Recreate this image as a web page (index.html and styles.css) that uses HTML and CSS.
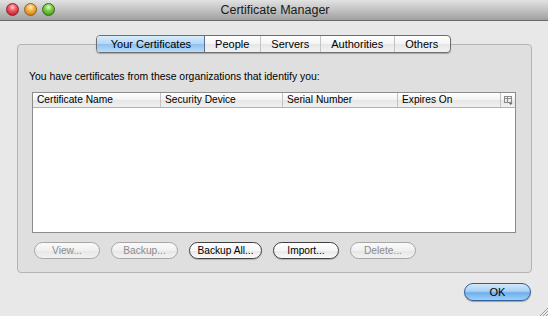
FILE: index.html
```html
<!DOCTYPE html>
<html>
<head>
<meta charset="utf-8">
<link rel="stylesheet" href="styles.css">
</head>
<body>
<div class="window">
  <div class="titlebar">
    <div class="lights">
      <span class="light red"></span>
      <span class="light orange"></span>
      <span class="light green"></span>
    </div>
    <div class="title">Certificate Manager</div>
  </div>
  <div class="content">
    <div class="tabs">
      <div class="tab selected">Your Certificates</div>
      <div class="tab">People</div>
      <div class="tab">Servers</div>
      <div class="tab">Authorities</div>
      <div class="tab last">Others</div>
    </div>
    <div class="group">
      <div class="label">You have certificates from these organizations that identify you:</div>
      <div class="table">
        <div class="thead">
          <div class="th c1">Certificate Name</div>
          <div class="th c2">Security Device</div>
          <div class="th c3">Serial Number</div>
          <div class="th c4">Expires On</div>
          <div class="th c5">
            <svg width="9" height="9" viewBox="0 0 9 9">
              <rect x="0.5" y="0.5" width="7" height="6" fill="none" stroke="#8a8a8a"/>
              <line x1="0.5" y1="2.5" x2="7.5" y2="2.5" stroke="#8a8a8a"/>
              <line x1="3.5" y1="0.5" x2="3.5" y2="6.5" stroke="#8a8a8a"/>
              <path d="M5 7 L8.5 7 L6.75 9 Z" fill="#666"/>
            </svg>
          </div>
        </div>
        <div class="tbody"></div>
      </div>
      <div class="buttons">
        <div class="btn disabled w-view">View...</div>
        <div class="btn disabled w-backup">Backup...</div>
        <div class="btn w-backupall">Backup All...</div>
        <div class="btn w-import">Import...</div>
        <div class="btn disabled w-delete">Delete...</div>
      </div>
    </div>
    <div class="footer">
      <div class="ok">OK</div>
    </div>
  </div>
  <div class="grip">
    <svg width="10" height="10" viewBox="0 0 10 10">
      <line x1="2" y1="10" x2="10" y2="2" stroke="#a0a0a0"/>
      <line x1="5" y1="10" x2="10" y2="5" stroke="#a0a0a0"/>
      <line x1="8" y1="10" x2="10" y2="8" stroke="#a0a0a0"/>
    </svg>
  </div>
</div>
</body>
</html>
```
FILE: styles.css
```css
html, body {
  margin: 0;
  padding: 0;
}
body {
  width: 548px;
  height: 316px;
  overflow: hidden;
  font-family: "Liberation Sans", Arial, sans-serif;
  color: #000;
}
.window {
  position: relative;
  width: 548px;
  height: 316px;
  background: #e8e8e8;
  display: flex;
  flex-direction: column;
}
.titlebar {
  position: relative;
  height: 21px;
  background: linear-gradient(#e2e2e2, #c2c2c2 50%, #a0a0a0);
  border-bottom: 1px solid #6a6a6a;
  box-sizing: border-box;
  display: flex;
  align-items: center;
  justify-content: center;
}
.lights {
  position: absolute;
  left: 6px;
  top: 3px;
  display: flex;
  gap: 5px;
}
.light {
  width: 13px;
  height: 13px;
  border-radius: 50%;
  box-sizing: border-box;
}
.red {
  background: radial-gradient(circle at 50% 30%, #ffd0d0 0, #f2606a 35%, #c8202a 80%, #9a1018 100%);
  border: 1px solid #8a2a2a;
}
.orange {
  background: radial-gradient(circle at 50% 30%, #fff0c0 0, #f6b850 35%, #d88010 80%, #a86008 100%);
  border: 1px solid #8a6020;
}
.green {
  background: radial-gradient(circle at 50% 30%, #e0ffd0 0, #88d050 35%, #40a018 80%, #2a7010 100%);
  border: 1px solid #3a6a20;
}
.title {
  font-size: 12.5px;
  color: #1a1a1a;
  padding-left: 2px;
}
.content {
  flex: 1;
  padding: 14px 16px 0 17px;
  display: flex;
  flex-direction: column;
}
.tabs {
  position: relative;
  z-index: 2;
  align-self: center;
  margin-left: -2px;
  display: flex;
  height: 18px;
  box-sizing: border-box;
  border: 1px solid #6e6e6e;
  border-radius: 4px;
  overflow: hidden;
  background: linear-gradient(#ffffff, #f4f4f4 50%, #e6e6e6 51%, #f2f2f2);
  box-shadow: 0 1px 1px rgba(0,0,0,0.25);
  margin-bottom: -9px;
}
.tab {
  font-size: 11px;
  line-height: 16px;
  padding: 0 11px 0 10px;
  border-left: 1px solid #c4c4c4;
  color: #000;
}
.tab:first-child {
  border-left: none;
}
.tab.selected {
  background: linear-gradient(#d8ecfc, #b4d6f6 50%, #8ec0ee 51%, #b8dcfa);
  padding: 0 13px 0 14px;
  border-right: 1px solid #5a7090;
}
.tab.selected + .tab {
  border-left: none;
}
.tab.last {
  padding: 0 12px 0 10px;
}
.group {
  height: 229px;
  box-sizing: border-box;
  border: 1px solid #b4b4b4;
  border-radius: 4px;
  background: #dfdfdf;
  padding: 25px 15px 0 14px;
  display: flex;
  flex-direction: column;
}
.label {
  font-size: 10.4px;
  line-height: 13px;
  height: 13px;
  margin-left: -3px;
  margin-bottom: 9px;
}
.table {
  height: 141px;
  box-sizing: border-box;
  border: 1px solid #8c8c8c;
  background: #fff;
  display: flex;
  flex-direction: column;
}
.thead {
  display: flex;
  height: 15px;
  box-sizing: border-box;
  border-bottom: 1px solid #b0b0b0;
  background: linear-gradient(#ffffff, #f2f2f2 50%, #e6e6e6 51%, #f0f0f0);
}
.th {
  font-size: 10.2px;
  line-height: 14px;
  padding-left: 4px;
  box-sizing: border-box;
  border-right: 1px solid #c2c2c2;
  white-space: nowrap;
}
.c1 { width: 128px; }
.c2 { width: 122px; }
.c3 { width: 115px; }
.c4 { width: 103px; }
.c5 {
  flex: 1;
  border-right: none;
  padding-left: 3px;
  display: flex;
  align-items: center;
}
.tbody {
  flex: 1;
}
.buttons {
  display: flex;
  gap: 11px;
  margin: 9px 0 0 2px;
}
.btn {
  height: 17px;
  box-sizing: border-box;
  border: 1px solid #404040;
  border-radius: 9px;
  font-size: 10.2px;
  line-height: 15px;
  text-align: center;
  background: linear-gradient(#ffffff, #f6f6f6 50%, #e8e8e8 51%, #fafafa);
  box-shadow: 0 1px 1px rgba(0,0,0,0.2);
  color: #000;
}
.btn.disabled {
  border-color: #a6a6a6;
  color: #8c8c8c;
  box-shadow: none;
  background: linear-gradient(#fafafa, #f0f0f0 50%, #e6e6e6 51%, #f2f2f2);
}
.w-view { width: 66px; }
.w-backup { width: 67px; }
.w-backupall { width: 73px; }
.w-import { width: 66px; }
.w-delete { width: 66px; }
.footer {
  display: flex;
  justify-content: flex-end;
  margin-top: 10px;
  padding-right: 1px;
}
.ok {
  width: 67px;
  height: 18px;
  box-sizing: border-box;
  border: 1px solid #2f5f9a;
  border-radius: 9px;
  font-size: 11px;
  line-height: 16px;
  text-align: center;
  background: linear-gradient(#d4e8fa, #a8d0f4 45%, #6eaeec 55%, #9ed0fa);
  box-shadow: 0 1px 1px rgba(0,0,0,0.3);
}
.grip {
  position: absolute;
  right: 0;
  bottom: 0;
  width: 10px;
  height: 10px;
  line-height: 0;
}
```
